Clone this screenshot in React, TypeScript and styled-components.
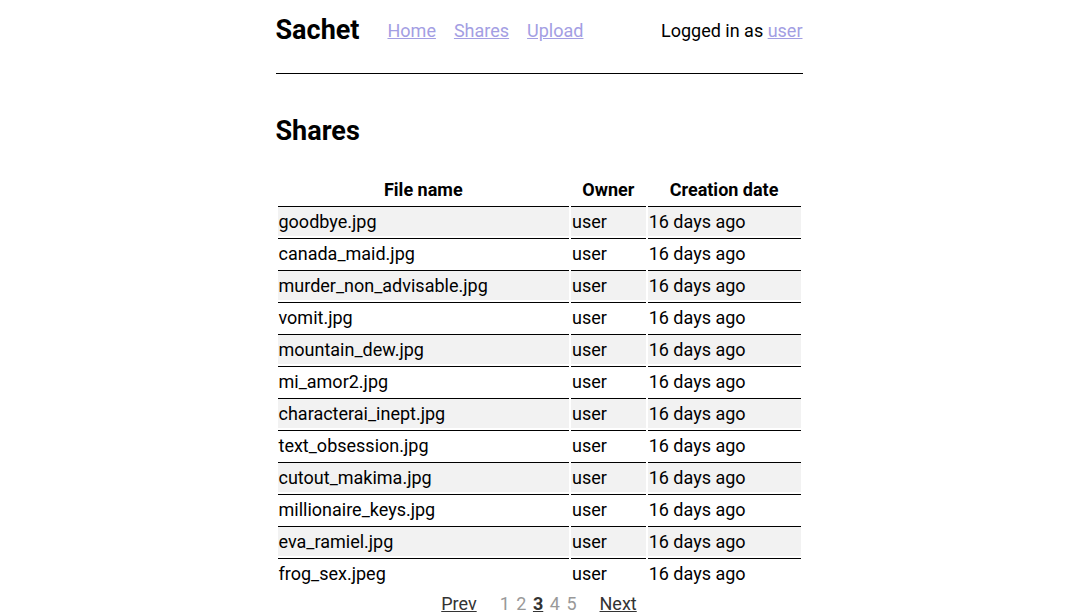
import React from "react";
import styled, { createGlobalStyle } from "styled-components";

const GlobalStyle = createGlobalStyle`
  html, body { margin: 0; padding: 0; background: #fff; }
  body {
    padding-left: 2px;
    font-family: Roboto, "Liberation Sans", sans-serif;
    font-size: 18px;
    color: #000;
  }
`;

const Page = styled.div`
  width: 527px;
  margin: 0 auto;
`;

const Header = styled.header`
  display: flex;
  align-items: center;
  height: 74px;
  padding-bottom: 13px;
  box-sizing: border-box;
  border-bottom: 1px solid #000;
`;

const Brand = styled.h1`
  font-size: 27px;
  font-weight: 700;
  margin: 0 28px 0 0;
  line-height: 34px;
`;

const Nav = styled.nav`
  display: flex;
  gap: 18px;
`;

const NavLink = styled.a`
  color: #a39ee3;
  text-decoration: underline;
`;

const UserBox = styled.div`
  margin-left: auto;
`;

const Title = styled.h2`
  font-size: 27px;
  font-weight: 700;
  margin: 41px 0 0;
  line-height: 32px;
`;

const Table = styled.table`
  width: 100%;
  margin-top: 26px;
  border-spacing: 2px;
`;

const Th = styled.th`
  font-weight: 700;
  padding: 4px 1px;
  line-height: 21px;
  text-align: center;
`;

const Row = styled.tr<{ $shade: boolean }>`
  background: ${(p) => (p.$shade ? "#f2f2f2" : "transparent")};
`;

const Td = styled.td`
  border-top: 1px solid #000;
  padding: 4px 1px;
  line-height: 21px;
`;

const Pager = styled.div`
  display: flex;
  justify-content: center;
  align-items: baseline;
  margin-top: 3px;
`;

const PagerLink = styled.a`
  color: #333;
  text-decoration: underline;
`;

const Pages = styled.div`
  display: flex;
  gap: 6.5px;
  margin: 0 23px;
`;

const PageNum = styled.span<{ $current?: boolean }>`
  color: ${(p) => (p.$current ? "#333" : "#999")};
  font-weight: ${(p) => (p.$current ? 700 : 400)};
  text-decoration: ${(p) => (p.$current ? "underline" : "none")};
`;

const files = [
  "goodbye.jpg",
  "canada_maid.jpg",
  "murder_non_advisable.jpg",
  "vomit.jpg",
  "mountain_dew.jpg",
  "mi_amor2.jpg",
  "characterai_inept.jpg",
  "text_obsession.jpg",
  "cutout_makima.jpg",
  "millionaire_keys.jpg",
  "eva_ramiel.jpg",
  "frog_sex.jpeg",
];

export default function App() {
  return (
    <>
      <GlobalStyle />
      <Page>
        <Header>
          <Brand>Sachet</Brand>
          <Nav>
            <NavLink href="#">Home</NavLink>
            <NavLink href="#">Shares</NavLink>
            <NavLink href="#">Upload</NavLink>
          </Nav>
          <UserBox>
            Logged in as <NavLink href="#">user</NavLink>
          </UserBox>
        </Header>

        <Title>Shares</Title>

        <Table>
          <thead>
            <tr>
              <Th>File name</Th>
              <Th>Owner</Th>
              <Th>Creation date</Th>
            </tr>
          </thead>
          <tbody>
            {files.map((f, i) => (
              <Row key={f} $shade={i % 2 === 0}>
                <Td>{f}</Td>
                <Td>user</Td>
                <Td>16 days ago</Td>
              </Row>
            ))}
          </tbody>
        </Table>

        <Pager>
          <PagerLink href="#">Prev</PagerLink>
          <Pages>
            <PageNum>1</PageNum>
            <PageNum>2</PageNum>
            <PageNum $current>3</PageNum>
            <PageNum>4</PageNum>
            <PageNum>5</PageNum>
          </Pages>
          <PagerLink href="#">Next</PagerLink>
        </Pager>
      </Page>
    </>
  );
}
